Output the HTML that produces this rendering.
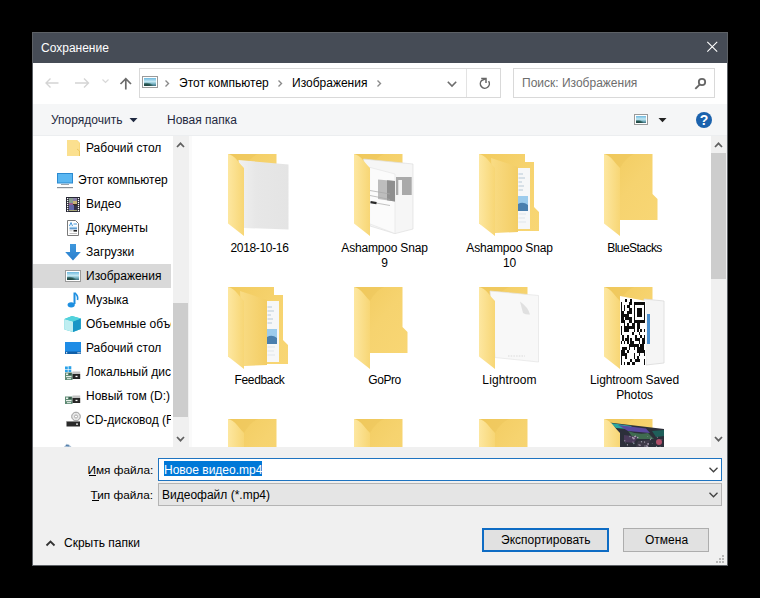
<!DOCTYPE html>
<html><head><meta charset="utf-8">
<style>
*{margin:0;padding:0;box-sizing:border-box}
html,body{width:760px;height:598px;overflow:hidden;background:#000}
body{position:relative;font-family:"Liberation Sans",sans-serif;font-size:12px;color:#000}
.a{position:absolute}
.t{position:absolute;white-space:nowrap;line-height:12px;font-size:12px}
svg{position:absolute;overflow:visible}
.lbl{position:absolute;width:125px;text-align:center;line-height:15px;font-size:12px;color:#000}
.pic{width:16px;height:12px;border:1px solid #9a9a9a;background:#fff}
.pic:after{content:"";position:absolute;left:1px;top:1px;right:1px;bottom:1px;background:radial-gradient(ellipse 60% 45% at 20% 100%,#1d3f3c 0%,#2b5a55 60%,transparent 100%),linear-gradient(180deg,#6fb9df 0%,#c4e8f3 45%,#7fb9c8 70%,#3d6f80 100%)}
</style></head><body>
<!-- window frame -->
<div class="a" style="left:32px;top:32px;width:696px;height:534px;background:#5d6166"></div>
<div class="a" style="left:33px;top:33px;width:694px;height:30px;background:#464c56"></div>
<div class="t" style="left:41px;top:42px;color:#fff">Сохранение</div>
<svg style="left:0;top:0" width="760" height="598">
  <path d="M707.3 41.8 L717.2 51.7 M717.2 41.8 L707.3 51.7" stroke="#fff" stroke-width="1.1" fill="none"/>
</svg>
<!-- client -->
<div class="a" style="left:33px;top:63px;width:694px;height:502px;background:#f0f0f0"></div>
<!-- address row -->
<div class="a" style="left:33px;top:63px;width:694px;height:41px;background:#fff"></div>
<!-- toolbar band -->
<div class="a" style="left:33px;top:104px;width:694px;height:32px;background:#f5f6f7;border-bottom:1px solid #eceef0"></div>
<!-- nav pane -->
<div class="a" style="left:33px;top:136px;width:140px;height:311px;background:#fff"></div>
<div class="a" style="left:173px;top:136px;width:16px;height:311px;background:#f0f0f0"></div>
<div class="a" style="left:173px;top:303px;width:15px;height:114px;background:#cdcdcd"></div>
<div class="a" style="left:189px;top:136px;width:3px;height:311px;background:#fafafa"></div>
<!-- content -->
<div class="a" style="left:192px;top:136px;width:519px;height:311px;background:#fff"></div>
<div class="a" style="left:711px;top:136px;width:16px;height:311px;background:#f0f0f0"></div>
<div class="a" style="left:711px;top:153px;width:15px;height:126px;background:#cdcdcd"></div>

<!-- address bar -->
<div class="a" style="left:139px;top:68px;width:362px;height:30px;border:1px solid #d9d9d9;background:#fff"></div>
<div class="a" style="left:466px;top:69px;width:1px;height:28px;background:#e3e3e3"></div>
<div class="a" style="left:513px;top:68px;width:202px;height:30px;border:1px solid #d9d9d9;background:#fff"></div>
<svg style="left:0;top:0" width="760" height="598">
  <!-- back -->
  <path d="M46 83 H58.5 M50.5 78.5 L46 83 L50.5 87.5" stroke="#d4d4d4" stroke-width="1.35" fill="none"/>
  <!-- forward -->
  <path d="M75 83 H88.5 M84 78.5 L88.5 83 L84 87.5" stroke="#d4d4d4" stroke-width="1.35" fill="none"/>
  <!-- small dropdown -->
  <path d="M102.5 79.5 L105.5 82.5 L108.5 79.5" stroke="#d8d8d8" stroke-width="1.2" fill="none"/>
  <!-- up -->
  <path d="M125.8 89.5 V79 M120.5 84 L125.8 78.7 L131 84" stroke="#6b6b6b" stroke-width="1.7" fill="none"/>
  <!-- breadcrumb chevrons -->
  <path d="M165.5 80.5 L168.5 83.5 L165.5 86.5" stroke="#8a8a8a" stroke-width="1.4" fill="none"/>
  <path d="M278.5 80.5 L281.5 83.5 L278.5 86.5" stroke="#8a8a8a" stroke-width="1.4" fill="none"/>
  <path d="M377.5 80.5 L380.5 83.5 L377.5 86.5" stroke="#8a8a8a" stroke-width="1.4" fill="none"/>
  <!-- address dropdown -->
  <path d="M447.8 81.8 L452 86 L456.2 81.8" stroke="#6d6d6d" stroke-width="1.6" fill="none"/>
  <!-- refresh -->
  <path d="M488.6 81.2 A4.5 4.5 0 1 1 481.6 80.6 L485.8 78.6" stroke="#666" stroke-width="1.5" fill="none"/>
  <path d="M481.2 78.5 H486 V83" stroke="#666" stroke-width="1.5" fill="none"/>
  <!-- search -->
  <circle cx="702" cy="82" r="3.2" stroke="#666" stroke-width="1.8" fill="none"/>
  <path d="M699.6 84.6 L695.3 88.9" stroke="#666" stroke-width="1.9" fill="none"/>
  <!-- organize triangle -->
  <path d="M129.5 118 H137.5 L133.5 122.2 Z" fill="#1f2940"/>
  <!-- view dropdown triangle -->
  <path d="M658.5 118 H666.5 L662.5 122.2 Z" fill="#222"/>
  <!-- help -->
  <circle cx="704" cy="120" r="8" fill="#1b62ad"/>
  <text x="704" y="125" text-anchor="middle" font-family="Liberation Sans" font-weight="bold" font-size="14" fill="#fff">?</text>
</svg>
<!-- picture icons -->
<div class="a pic" style="left:142px;top:76px"></div>
<div class="a pic" style="left:634px;top:114px;width:14px;height:11px"></div>
<div class="t" style="left:179px;top:77px;color:#000">Этот компьютер</div>
<div class="t" style="left:292px;top:77px;color:#000">Изображения</div>
<div class="t" style="left:522px;top:77px;color:#6d6d6d">Поиск: Изображения</div>
<div class="t" style="left:51px;top:114px;color:#1f2940">Упорядочить</div>
<div class="t" style="left:167px;top:114px;color:#1f2940">Новая папка</div>

<!-- NAV PANE -->
<div class="a" style="left:33px;top:264px;width:138px;height:24px;background:#d9d9d9"></div>
<div class="a" style="left:33px;top:136px;width:138px;height:311px;overflow:hidden">
<svg style="left:-33px;top:-136px" width="760" height="598">
  <!-- folder (Рабочий стол top) -->
  <path d="M67 140 H77 L80 143 V156 H67 Z" fill="#f6d36b"/>
  <path d="M67 140 H76.5 L79.5 143 V156 H67 Z" fill="#fbe08f"/>
  <path d="M77 149 L79.5 151 V156" stroke="#e9c155" stroke-width="0.8" fill="none"/>
  <!-- monitor -->
  <rect x="57.5" y="173.5" width="15" height="9.5" fill="#5ab7f2" stroke="#2b8ad0" stroke-width="1"/>
  <rect x="61" y="184" width="8" height="1" fill="#9aa4ad"/>
  <rect x="57" y="187" width="16" height="1.2" fill="#8a9299"/>
  <!-- film -->
  <rect x="66" y="197" width="14" height="15" fill="#262633"/>
  <rect x="69" y="198" width="8" height="13" fill="#4a4a66"/>
  <rect x="69" y="198" width="4" height="5" fill="#889e90"/>
  <rect x="73" y="198" width="4" height="3" fill="#8a80a8"/>
  <rect x="73" y="201" width="4" height="3" fill="#c9b276"/>
  <rect x="69" y="203" width="4" height="2" fill="#9a5e92"/>
  <rect x="73" y="204" width="4" height="2" fill="#3a2e28"/>
  <rect x="69" y="205" width="5" height="5" fill="#6266aa"/>
  <rect x="74" y="206" width="3" height="4" fill="#33334a"/>
  <rect x="69" y="210" width="8" height="1" fill="#a8a878"/>
  <rect x="67" y="198" width="1.3" height="1.2" fill="#fff"/><rect x="77.8" y="198" width="1.3" height="1.2" fill="#fff"/><rect x="67" y="200" width="1.3" height="1.2" fill="#fff"/><rect x="77.8" y="200" width="1.3" height="1.2" fill="#fff"/><rect x="67" y="202" width="1.3" height="1.2" fill="#fff"/><rect x="77.8" y="202" width="1.3" height="1.2" fill="#fff"/><rect x="67" y="204" width="1.3" height="1.2" fill="#fff"/><rect x="77.8" y="204" width="1.3" height="1.2" fill="#fff"/><rect x="67" y="206" width="1.3" height="1.2" fill="#fff"/><rect x="77.8" y="206" width="1.3" height="1.2" fill="#fff"/><rect x="67" y="208" width="1.3" height="1.2" fill="#fff"/><rect x="77.8" y="208" width="1.3" height="1.2" fill="#fff"/><rect x="67" y="210" width="1.3" height="1.2" fill="#fff"/><rect x="77.8" y="210" width="1.3" height="1.2" fill="#fff"/>
  <!-- document -->
  <path d="M67.5 220.5 H75.5 L78.5 223.5 V235.5 H67.5 Z" fill="#fff" stroke="#7a7a7a" stroke-width="1"/>
  <path d="M69.5 226 L71 222.5 L72.5 226 M73.5 224 H77" stroke="#2f8ad2" stroke-width="0.9" fill="none"/>
  <path d="M69.5 227.3 H77" stroke="#5aa7e0" stroke-width="0.8"/>
  <path d="M69.5 228.8 H77" stroke="#1f6fb8" stroke-width="1"/>
  <path d="M69.5 230.8 H72.5 M69.5 233.5 H77" stroke="#b0b0b0" stroke-width="0.8"/>
  <path d="M73.5 230.8 H77" stroke="#222" stroke-width="1.6"/>
  <!-- download arrow -->
  <defs><linearGradient id="gdl" x1="0" y1="0" x2="0" y2="1"><stop offset="0" stop-color="#3e97dc"/><stop offset="1" stop-color="#2a7fce"/></linearGradient></defs><path d="M70 244 H76 V252 H80.8 L73 260.5 L65.2 252 H70 Z" fill="url(#gdl)"/>
  <!-- picture (selected) -->

  <!-- music note -->
  <path d="M74.5 292.5 V304" stroke="#1e8fe0" stroke-width="2"/>
  <path d="M75 293 Q78.5 296 77.5 300" stroke="#1e8fe0" stroke-width="1.6" fill="none"/>
  <ellipse cx="71.2" cy="304.8" rx="3.6" ry="2.6" fill="#1e8fe0"/>
  <!-- cube -->
  <path d="M64.5 319 L72 316 L80.8 318.5 V329 L73 332 L64.5 329.5 Z" fill="#37c6cf"/>
  <path d="M64.5 319 L73 321.5 V332 L64.5 329.5 Z" fill="#bfeef1"/>
  <path d="M73 321.5 L80.8 318.5 V329 L73 332 Z" fill="#1896c6"/>
  <path d="M64.5 319 L72 316 L80.8 318.5 L73 321.5 Z" fill="#52d2dc"/>
  <!-- desktop -->
  <rect x="65" y="342" width="16" height="12" fill="#1e8ce6"/>
  <rect x="65" y="351.5" width="16" height="2.5" fill="#0f5fa8"/>
  <rect x="66" y="352.2" width="1.2" height="1.2" fill="#fff"/><rect x="77.5" y="352.2" width="1.2" height="1.2" fill="#fff"/><rect x="79.3" y="352.2" width="1.2" height="1.2" fill="#fff"/>
  <!-- local disk -->
  <rect x="65" y="366.5" width="2.8" height="2.5" fill="#2aa1e8"/><rect x="68.5" y="366.2" width="2.8" height="2.8" fill="#2aa1e8"/>
  <rect x="65" y="369.6" width="2.8" height="2.5" fill="#2aa1e8"/><rect x="68.5" y="369.6" width="2.8" height="2.6" fill="#2aa1e8"/>
  <rect x="65" y="372.5" width="7.5" height="7.5" fill="#5f8a74"/>
  <rect x="66" y="373.5" width="2" height="1.5" fill="#e8f0ea"/><rect x="69" y="373.5" width="2.5" height="1" fill="#1f2f2a"/>
  <rect x="66" y="376.0" width="5.5" height="1.2" fill="#e8f0ea"/><rect x="67" y="378.0" width="4" height="1.2" fill="#d0e0d8"/>
  <rect x="72.5" y="371.5" width="7.7" height="2.5" fill="#c4c4c4"/>
  <rect x="72.5" y="374.0" width="7.7" height="5" fill="#262626"/>
  <rect x="75.5" y="375.8" width="2" height="1.3" fill="#fff"/>
  <!-- новый том -->
  <rect x="65" y="396.5" width="7.5" height="7.5" fill="#5f8a74"/>
  <rect x="66" y="397.5" width="2" height="1.5" fill="#e8f0ea"/><rect x="69" y="397.5" width="2.5" height="1" fill="#1f2f2a"/>
  <rect x="66" y="400.0" width="5.5" height="1.2" fill="#e8f0ea"/><rect x="67" y="402.0" width="4" height="1.2" fill="#d0e0d8"/>
  <rect x="72.5" y="395.5" width="7.7" height="2.5" fill="#c4c4c4"/>
  <rect x="72.5" y="398.0" width="7.7" height="5" fill="#262626"/>
  <rect x="75.5" y="399.8" width="2" height="1.3" fill="#fff"/>
  <!-- CD -->
  <circle cx="76" cy="416.5" r="4.3" fill="#e6e6e6" stroke="#9a9a9a" stroke-width="1"/>
  <circle cx="76" cy="416.5" r="1.5" fill="#fff" stroke="#9a9a9a" stroke-width="0.8"/>
  <rect x="66.5" y="421.5" width="13.5" height="5" fill="#2a2a2a"/>
  <rect x="66.5" y="421" width="13.5" height="1" fill="#8a8a8a"/>
  <rect x="76" y="423.5" width="2" height="1.2" fill="#fff"/>
  <!-- network partial -->
  <path d="M64 447 L66.5 443.8 L69 444.5 L71.5 447 Z" fill="#a9bfd4"/><path d="M66 445.5 L69 445.8" stroke="#4a78a8" stroke-width="1"/>
</svg>
<div class="t" style="left:53px;top:6px">Рабочий стол</div>
<div class="t" style="left:45px;top:38px">Этот компьютер</div>
<div class="t" style="left:53px;top:62px">Видео</div>
<div class="t" style="left:53px;top:86px">Документы</div>
<div class="t" style="left:53px;top:110px">Загрузки</div>
<div class="t" style="left:53px;top:134px">Изображения</div>
<div class="t" style="left:53px;top:158px">Музыка</div>
<div class="t" style="left:53px;top:182px">Объемные объекты</div>
<div class="t" style="left:53px;top:206px">Рабочий стол</div>
<div class="t" style="left:53px;top:230px">Локальный диск (C:)</div>
<div class="t" style="left:53px;top:254px">Новый том (D:)</div>
<div class="t" style="left:53px;top:278px">CD-дисковод (F:)</div>
</div>
<svg style="left:0;top:0" width="760" height="598">
  <!-- nav scroll chevrons -->
  <path d="M177 147 L180.5 143.3 L184 147" stroke="#606060" stroke-width="1.7" fill="none"/>
  <path d="M177 437 L180.5 440.7 L184 437" stroke="#606060" stroke-width="1.7" fill="none"/>
  <!-- content scroll chevrons -->
  <path d="M715 147 L718.5 143.3 L722 147" stroke="#606060" stroke-width="1.7" fill="none"/>
  <path d="M715 437 L718.5 440.7 L722 437" stroke="#606060" stroke-width="1.7" fill="none"/>
</svg>

<svg style="left:0;top:0" width="760" height="598">
<defs>
  <linearGradient id="gb" x1="0" y1="0" x2="1" y2="1">
    <stop offset="0" stop-color="#f2cb5e"/><stop offset="0.5" stop-color="#f6d36f"/><stop offset="1" stop-color="#f8d674"/>
  </linearGradient>
  <linearGradient id="gf" x1="0" y1="0" x2="1" y2="0">
    <stop offset="0" stop-color="#fde7a0"/><stop offset="1" stop-color="#f7d675"/>
  </linearGradient>
  <linearGradient id="gm" x1="0" y1="0" x2="1" y2="0">
    <stop offset="0" stop-color="#f9dc85"/><stop offset="1" stop-color="#f3cd64"/>
  </linearGradient>
  
  
</defs>
<clipPath id="cc"><rect x="192" y="136" width="519" height="311"/></clipPath>
<g clip-path="url(#cc)">
  <!-- row1 col1: 2018-10-16 -->
  <g transform="translate(228,154)">
    <path d="M0 0 H48.5 V40 L53.5 45 V66 H0 Z" fill="url(#gb)"/><path d="M0 0 H30 Q22 3 16 14 L0 0 Z" fill="#ecc257" opacity="0.4"/>
    <defs><linearGradient id="gp" x1="0" y1="0" x2="1" y2="0"><stop offset="0" stop-color="#f1f1f1"/><stop offset="0.35" stop-color="#e7e7e7"/><stop offset="1" stop-color="#e4e4e4"/></linearGradient></defs>
    <path d="M10.5 6 L60.5 10.5 V75.5 L16 74 Z" fill="url(#gp)"/>
    <path d="M0 0 Q5 1 9 6 T16 14 V82 L0 69.5 Z" fill="url(#gf)"/>
  </g>
  <!-- row1 col2: Ashampoo Snap 9 -->
  <g transform="translate(354,154)">
    <path d="M0 0 H48.5 V40 L53.5 45 V66 H0 Z" fill="url(#gb)"/><path d="M0 0 H30 Q22 3 16 14 L0 0 Z" fill="#ecc257" opacity="0.4"/>
    <path d="M9.5 5 L59 10 V75 L41 79.6 L16 72 Z" fill="#f6f6f6" stroke="#dedede" stroke-width="0.7"/>
    <path d="M42 23 H57.7 V41 H42 Z" fill="#a9a9a9"/>
    <path d="M44.3 26 H48 V41 H44.3 Z" fill="#f4f4f4"/>
    <path d="M15.6 13.3 L41 20 V79.6 L15.6 69.8 Z" fill="#fbfbfb" stroke="#e2e2e2" stroke-width="0.6"/>
    <path d="M24 25.5 L41 27 V47.5 L24 45 Z" fill="#bdbdbd"/>
    <path d="M33 26.3 L41 27 V47.5 L33 46.3 Z" fill="#8f8f8f"/>
    <path d="M16 36.5 L36 40 M16 41.5 L36 45.5 M22 49 L36 51.5" stroke="#a8a8a8" stroke-width="0.7"/>
    <path d="M16.5 48.2 L22.5 49.2" stroke="#2a2a2a" stroke-width="2.2"/>
    <path d="M0 0 Q5 1 9 6 T16 14 V82 L0 69.5 Z" fill="url(#gf)"/>
  </g>
  <!-- row1 col3: Ashampoo Snap 10 -->
  <g transform="translate(479,154)">
    <path d="M0 0 H46 V8 L55 8 V53 L60 58 V77 H16 L0 69.5 Z" fill="url(#gb)"/>
    <path d="M38 14 H51 V75 H38 Z" fill="#f6f7f8"/>
    <path d="M39.5 20 H44 M39.5 24 H46 M39.5 28 H43 M39.5 32 H45 M39.5 36 H44" stroke="#9fb4c8" stroke-width="0.7"/>
    <path d="M39 42 H49 V57 H39 Z" fill="#9ccbec"/><path d="M39 50 Q44 47 49 51 V57 H39 Z" fill="#4a7fae"/>
    <path d="M39.5 60 H47 M39.5 64 H46 M39.5 68 H47" stroke="#d5dde5" stroke-width="0.7"/>
    <path d="M12 4 L39 13 V78 L16 79 Z" fill="url(#gm)"/>
    <path d="M0 0 Q5 1 9 6 T16 14 V82 L0 69.5 Z" fill="url(#gf)"/>
  </g>
  <!-- row1 col4: BlueStacks -->
  <g transform="translate(604,154)">
    <path d="M0 0 H48.5 V40 L53.5 45 V66 H0 Z" fill="url(#gb)"/><path d="M0 0 H30 Q22 3 16 14 L0 0 Z" fill="#ecc257" opacity="0.4"/><path d="M0 0 Q5 1 9 6 T16 14 V82 L0 69.5 Z" fill="url(#gf)"/>
  </g>
  <!-- row2 col1: Feedback -->
  <g transform="translate(228,287)">
    <path d="M0 0 H46 V8 L55 8 V53 L60 58 V77 H16 L0 69.5 Z" fill="url(#gb)"/>
    <path d="M38 14 H51 V75 H38 Z" fill="#f6f7f8"/>
    <path d="M39.5 20 H44 M39.5 24 H46 M39.5 28 H43 M39.5 32 H45 M39.5 36 H44" stroke="#9fb4c8" stroke-width="0.7"/>
    <path d="M39 42 H49 V57 H39 Z" fill="#9ccbec"/><path d="M39 50 Q44 47 49 51 V57 H39 Z" fill="#4a7fae"/>
    <path d="M39.5 60 H47 M39.5 64 H46 M39.5 68 H47" stroke="#d5dde5" stroke-width="0.7"/>
    <path d="M12 4 L39 13 V78 L16 79 Z" fill="url(#gm)"/>
    <path d="M0 0 Q5 1 9 6 T16 14 V82 L0 69.5 Z" fill="url(#gf)"/>
  </g>
  <!-- row2 col2: GoPro -->
  <g transform="translate(354,287)">
    <path d="M0 0 H48.5 V40 L53.5 45 V66 H0 Z" fill="url(#gb)"/><path d="M0 0 H30 Q22 3 16 14 L0 0 Z" fill="#ecc257" opacity="0.4"/><path d="M0 0 Q5 1 9 6 T16 14 V82 L0 69.5 Z" fill="url(#gf)"/>
  </g>
  <!-- row2 col3: Lightroom -->
  <g transform="translate(479,287)">
    <path d="M0 0 H48.5 V40 L53.5 45 V66 H0 Z" fill="url(#gb)"/><path d="M0 0 H30 Q22 3 16 14 L0 0 Z" fill="#ecc257" opacity="0.4"/>
    <path d="M11 4 L59.5 8.5 V75 L16 70.5 Z" fill="#f8f8f8" stroke="#e4e4e4" stroke-width="0.7"/>
    <path d="M41 14.5 Q49 20 51 27.5 Q47 28 44 26 Z" fill="#e0e0e0"/>
    <path d="M29 69 H46" stroke="#c8c8c8" stroke-width="0.6" stroke-dasharray="1.5 1.2"/>
    <path d="M0 0 Q5 1 9 6 T16 14 V82 L0 69.5 Z" fill="url(#gf)"/>
  </g>
  <!-- row2 col4: Lightroom Saved Photos -->
  <g transform="translate(604,287)">
    <path d="M0 0 H48.5 V40 L53.5 45 V66 H0 Z" fill="url(#gb)"/><path d="M0 0 H30 Q22 3 16 14 L0 0 Z" fill="#ecc257" opacity="0.4"/>
    <path d="M40 12 L60 14 V76 L42 78 Z" fill="#f5f5f5" stroke="#dadada" stroke-width="0.8"/>
    <rect x="43" y="27" width="3" height="30" fill="#4a90d0"/>
    <path d="M16 9 L42 14 V79 L16 79 Z" fill="#fff"/>
    <g id="qr" fill="#0d0d0d" shape-rendering="crispEdges"><rect x="21.45" y="12.00" width="1.65" height="3.00"/><rect x="26.40" y="12.00" width="1.65" height="3.00"/><rect x="16.50" y="15.00" width="1.65" height="3.00"/><rect x="24.75" y="15.00" width="3.30" height="3.00"/><rect x="29.70" y="15.00" width="11.55" height="3.00"/><rect x="16.50" y="18.00" width="1.65" height="3.00"/><rect x="19.80" y="18.00" width="1.65" height="3.00"/><rect x="23.10" y="18.00" width="3.30" height="3.00"/><rect x="29.70" y="18.00" width="1.65" height="3.00"/><rect x="39.60" y="18.00" width="1.65" height="3.00"/><rect x="16.50" y="21.00" width="1.65" height="3.00"/><rect x="19.80" y="21.00" width="1.65" height="3.00"/><rect x="24.75" y="21.00" width="3.30" height="3.00"/><rect x="29.70" y="21.00" width="1.65" height="3.00"/><rect x="33.00" y="21.00" width="4.95" height="3.00"/><rect x="39.60" y="21.00" width="1.65" height="3.00"/><rect x="16.50" y="24.00" width="3.30" height="3.00"/><rect x="23.10" y="24.00" width="4.95" height="3.00"/><rect x="29.70" y="24.00" width="1.65" height="3.00"/><rect x="33.00" y="24.00" width="4.95" height="3.00"/><rect x="39.60" y="24.00" width="1.65" height="3.00"/><rect x="16.50" y="27.00" width="8.25" height="3.00"/><rect x="29.70" y="27.00" width="1.65" height="3.00"/><rect x="33.00" y="27.00" width="4.95" height="3.00"/><rect x="39.60" y="27.00" width="1.65" height="3.00"/><rect x="16.50" y="30.00" width="3.30" height="3.00"/><rect x="21.45" y="30.00" width="6.60" height="3.00"/><rect x="29.70" y="30.00" width="1.65" height="3.00"/><rect x="39.60" y="30.00" width="1.65" height="3.00"/><rect x="16.50" y="33.00" width="4.95" height="3.00"/><rect x="24.75" y="33.00" width="3.30" height="3.00"/><rect x="29.70" y="33.00" width="11.55" height="3.00"/><rect x="19.80" y="36.00" width="1.65" height="3.00"/><rect x="23.10" y="36.00" width="1.65" height="3.00"/><rect x="28.05" y="36.00" width="3.30" height="3.00"/><rect x="33.00" y="36.00" width="3.30" height="3.00"/><rect x="16.50" y="39.00" width="1.65" height="3.00"/><rect x="19.80" y="39.00" width="11.55" height="3.00"/><rect x="33.00" y="39.00" width="3.30" height="3.00"/><rect x="16.50" y="42.00" width="1.65" height="3.00"/><rect x="19.80" y="42.00" width="4.95" height="3.00"/><rect x="29.70" y="42.00" width="1.65" height="3.00"/><rect x="33.00" y="42.00" width="1.65" height="3.00"/><rect x="36.30" y="42.00" width="1.65" height="3.00"/><rect x="39.60" y="42.00" width="1.65" height="3.00"/><rect x="16.50" y="45.00" width="1.65" height="3.00"/><rect x="28.05" y="45.00" width="1.65" height="3.00"/><rect x="34.65" y="45.00" width="1.65" height="3.00"/><rect x="18.15" y="48.00" width="1.65" height="3.00"/><rect x="23.10" y="48.00" width="1.65" height="3.00"/><rect x="31.35" y="48.00" width="1.65" height="3.00"/><rect x="36.30" y="48.00" width="1.65" height="3.00"/><rect x="39.60" y="48.00" width="1.65" height="3.00"/><rect x="18.15" y="51.00" width="1.65" height="3.00"/><rect x="21.45" y="51.00" width="3.30" height="3.00"/><rect x="26.40" y="51.00" width="1.65" height="3.00"/><rect x="31.35" y="51.00" width="4.95" height="3.00"/><rect x="37.95" y="51.00" width="3.30" height="3.00"/><rect x="16.50" y="54.00" width="1.65" height="3.00"/><rect x="19.80" y="54.00" width="1.65" height="3.00"/><rect x="23.10" y="54.00" width="1.65" height="3.00"/><rect x="26.40" y="54.00" width="3.30" height="3.00"/><rect x="34.65" y="54.00" width="1.65" height="3.00"/><rect x="37.95" y="54.00" width="3.30" height="3.00"/><rect x="24.75" y="57.00" width="9.90" height="3.00"/><rect x="36.30" y="57.00" width="3.30" height="3.00"/><rect x="18.15" y="60.00" width="4.95" height="3.00"/><rect x="24.75" y="60.00" width="1.65" height="3.00"/><rect x="29.70" y="60.00" width="1.65" height="3.00"/><rect x="33.00" y="60.00" width="6.60" height="3.00"/><rect x="16.50" y="63.00" width="4.95" height="3.00"/><rect x="23.10" y="63.00" width="1.65" height="3.00"/><rect x="33.00" y="63.00" width="8.25" height="3.00"/><rect x="16.50" y="66.00" width="6.60" height="3.00"/><rect x="29.70" y="66.00" width="1.65" height="3.00"/><rect x="34.65" y="66.00" width="1.65" height="3.00"/><rect x="39.60" y="66.00" width="1.65" height="3.00"/><rect x="16.50" y="69.00" width="1.65" height="3.00"/><rect x="21.45" y="69.00" width="1.65" height="3.00"/><rect x="29.70" y="69.00" width="1.65" height="3.00"/><rect x="33.00" y="69.00" width="1.65" height="3.00"/><rect x="16.50" y="72.00" width="1.65" height="3.00"/><rect x="26.40" y="72.00" width="1.65" height="3.00"/><rect x="31.35" y="72.00" width="4.95" height="3.00"/><rect x="39.60" y="72.00" width="1.65" height="3.00"/><rect x="16.50" y="75.00" width="1.65" height="3.00"/><rect x="19.80" y="75.00" width="1.65" height="3.00"/><rect x="23.10" y="75.00" width="3.30" height="3.00"/><rect x="28.05" y="75.00" width="3.30" height="3.00"/><rect x="39.60" y="75.00" width="1.65" height="3.00"/></g>
    <path d="M0 0 Q5 1 9 6 T16 14 V82 L0 69.5 Z" fill="url(#gf)"/>
  </g>
  <!-- row3 -->
  <g transform="translate(228,419)"><path d="M0 0 H48.5 V40 L53.5 45 V66 H0 Z" fill="url(#gb)"/><path d="M0 0 H30 Q22 3 16 14 L0 0 Z" fill="#ecc257" opacity="0.4"/><path d="M0 0 Q5 1 9 6 T16 14 V82 L0 69.5 Z" fill="url(#gf)"/></g>
  <g transform="translate(354,419)"><path d="M0 0 H48.5 V40 L53.5 45 V66 H0 Z" fill="url(#gb)"/><path d="M0 0 H30 Q22 3 16 14 L0 0 Z" fill="#ecc257" opacity="0.4"/><path d="M0 0 Q5 1 9 6 T16 14 V82 L0 69.5 Z" fill="url(#gf)"/></g>
  <g transform="translate(479,419)"><path d="M0 0 H48.5 V40 L53.5 45 V66 H0 Z" fill="url(#gb)"/><path d="M0 0 H30 Q22 3 16 14 L0 0 Z" fill="#ecc257" opacity="0.4"/><path d="M0 0 Q5 1 9 6 T16 14 V82 L0 69.5 Z" fill="url(#gf)"/></g>
  <g transform="translate(604,419)">
    <path d="M0 0 H48.5 V40 L53.5 45 V66 H0 Z" fill="url(#gb)"/><path d="M0 0 H30 Q22 3 16 14 L0 0 Z" fill="#ecc257" opacity="0.4"/>
    <path d="M5 3.5 L60 10 V30 H17 Z" fill="#2c2f3a"/>
    <path d="M6 4 L28 7 L24 10 L12 9 Z" fill="#2aa7a0"/>
    <path d="M14 6 L42 9.5 L46 14 L24 12 Z" fill="#5a48a0"/>
    <path d="M24 12 Q34 16 44 14 L50 20 L30 20 Z" fill="#3f6b50"/>
    <path d="M20 16 L34 18 L30 24 L20 23 Z" fill="#4a3b5a"/>
    <path d="M34 22 L46 21 L44 28 L32 28 Z" fill="#3e3a48"/>
    <circle cx="55" cy="23" r="3" fill="#b0506a"/><circle cx="29.0" cy="23.0" r="0.6" fill="#b0a0b8"/><circle cx="43.8" cy="17.7" r="0.4" fill="#b0a0b8"/><circle cx="29.9" cy="19.6" r="0.9" fill="#b0a0b8"/><circle cx="40.6" cy="23.0" r="0.6" fill="#c8c0d0"/><circle cx="28.8" cy="18.7" r="0.9" fill="#b0a0b8"/><circle cx="48.2" cy="24.4" r="0.4" fill="#9a9aa8"/><circle cx="31.4" cy="17.3" r="0.8" fill="#b0a0b8"/><circle cx="42.6" cy="27.1" r="0.6" fill="#b0a0b8"/><circle cx="35.0" cy="25.8" r="0.6" fill="#c8c0d0"/><circle cx="53.4" cy="18.1" r="0.5" fill="#c8c0d0"/><circle cx="29.8" cy="24.4" r="0.8" fill="#7a8a90"/><circle cx="36.0" cy="26.2" r="0.7" fill="#b0a0b8"/><circle cx="42.2" cy="26.9" r="0.7" fill="#9a9aa8"/><circle cx="52.5" cy="27.9" r="0.7" fill="#c8c0d0"/><circle cx="46.5" cy="20.6" r="0.7" fill="#9a9aa8"/><circle cx="47.1" cy="19.3" r="0.8" fill="#7a8a90"/><circle cx="30.8" cy="17.7" r="0.8" fill="#b0a0b8"/><circle cx="23.4" cy="25.8" r="0.6" fill="#c8c0d0"/><circle cx="20.8" cy="21.7" r="0.6" fill="#9a9aa8"/><circle cx="21.7" cy="23.8" r="0.4" fill="#7a8a90"/><circle cx="40.9" cy="27.1" r="0.5" fill="#c8c0d0"/><circle cx="57.9" cy="20.4" r="0.4" fill="#9a9aa8"/><circle cx="56.1" cy="27.7" r="0.5" fill="#7a8a90"/><circle cx="25.9" cy="17.5" r="0.8" fill="#7a8a90"/><circle cx="33.7" cy="18.5" r="0.8" fill="#b0a0b8"/><circle cx="37.5" cy="22.7" r="0.7" fill="#9a9aa8"/><circle cx="43.6" cy="27.3" r="0.7" fill="#b0a0b8"/><circle cx="44.1" cy="24.9" r="0.9" fill="#b0a0b8"/>
    <path d="M48 12 L60 11 V17 L52 18 Z" fill="#1f5f5a"/>
    <path d="M0 0 Q5 1 9 6 T16 14 V82 L0 69.5 Z" fill="url(#gf)"/>
  </g>
</g>
</svg>
<div class="lbl" style="left:197px;top:241px;letter-spacing:-0.34px">2018-10-16</div>
<div class="lbl" style="left:322px;top:241px;letter-spacing:-0.19px">Ashampoo Snap<br>9</div>
<div class="lbl" style="left:447px;top:241px;letter-spacing:-0.19px">Ashampoo Snap<br>10</div>
<div class="lbl" style="left:572px;top:241px;letter-spacing:-0.54px">BlueStacks</div>
<div class="lbl" style="left:197px;top:373px;letter-spacing:-0.34px">Feedback</div>
<div class="lbl" style="left:322px;top:373px;letter-spacing:-0.48px">GoPro</div>
<div class="lbl" style="left:447px;top:373px;letter-spacing:0.1px">Lightroom</div>
<div class="lbl" style="left:572px;top:373px;letter-spacing:-0.12px">Lightroom Saved<br>Photos</div>

<!-- BOTTOM PANEL -->
<div class="t" style="left:87.5px;top:464px;font-size:11.8px">Имя файла:</div>
<div class="a" style="left:89px;top:475px;width:7px;height:1px;background:#000"></div>
<div class="t" style="left:90.5px;top:489px;font-size:11.8px">Тип файла:</div>
<div class="a" style="left:92px;top:500px;width:7px;height:1px;background:#000"></div>
<div class="a" style="left:158px;top:458px;width:564px;height:23px;border:1px solid #1f74c0;background:#fff"></div>
<div class="a" style="left:164px;top:461px;width:98px;height:15px;background:#0078d7"></div>
<div class="t" style="left:164px;top:464px;color:#fff">Новое видео.mp4</div>
<div class="a" style="left:158px;top:483px;width:564px;height:23px;border:1px solid #b4b4b4;background:#e5e5e5"></div>
<div class="t" style="left:162px;top:489px">Видеофайл (*.mp4)</div>
<div class="a" style="left:482px;top:528px;width:127px;height:24px;border:2px solid #0e6cc4;background:#e1e1e1"></div>
<div class="t" style="left:501px;top:534px">Экспортировать</div>
<div class="a" style="left:623px;top:528px;width:86px;height:24px;border:1px solid #adadad;background:#e1e1e1"></div>
<div class="t" style="left:645px;top:534px">Отмена</div>
<div class="t" style="left:64px;top:537px">Скрыть папки</div>
<svg style="left:0;top:0" width="760" height="598">
  <path d="M709.5 467.8 L713.5 471.8 L717.5 467.8" stroke="#404040" stroke-width="1.3" fill="none"/>
  <path d="M709.5 492.8 L713.5 496.8 L717.5 492.8" stroke="#404040" stroke-width="1.3" fill="none"/>
  <path d="M46.5 545.5 L50.5 541.5 L54.5 545.5" stroke="#333" stroke-width="1.8" fill="none"/>
  <g fill="#b8b8b8">
    <rect x="722" y="555" width="2" height="2"/>
    <rect x="719" y="558" width="2" height="2"/><rect x="722" y="558" width="2" height="2"/>
    <rect x="716" y="561" width="2" height="2"/><rect x="719" y="561" width="2" height="2"/><rect x="722" y="561" width="2" height="2"/>
  </g>
</svg>
<div class="a pic" style="left:65px;top:270px"></div>
</body></html>
